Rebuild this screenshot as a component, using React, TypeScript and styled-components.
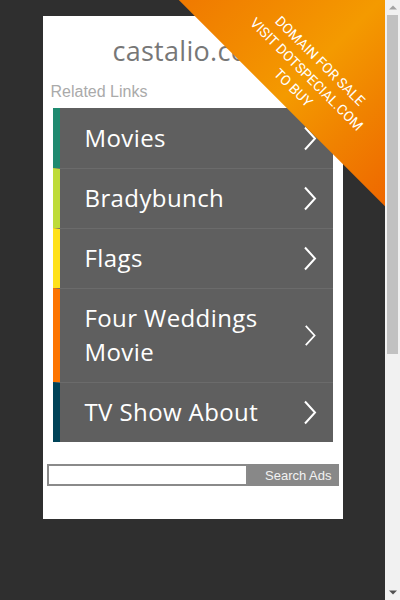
import styled, { createGlobalStyle } from "styled-components";

const GlobalStyle = createGlobalStyle`
  html, body {
    margin: 0;
    padding: 0;
    background-color: #2f2f2f;
    overflow: hidden;
  }
`;

const Page = styled.div`
  height: 100vh;
  display: flex;
`;

const Viewport = styled.div`
  position: relative;
  flex: 1;
  padding-top: 16px;
  overflow: hidden;
`;

const Card = styled.div`
  width: 300px;
  margin: 0 auto;
  padding-bottom: 33px;

  background-color: #ffffff;

  display: flex;
  flex-direction: column;
`;

const Title = styled.h1`
  margin: 0;
  height: 66px;

  color: #777777;
  font-family: "Open Sans", sans-serif;
  font-size: 27px;
  font-weight: 400;
  letter-spacing: 0.3px;

  display: flex;
  align-items: center;
  justify-content: center;
  padding-top: 3px;
  box-sizing: border-box;
`;

const SectionLabel = styled.p`
  margin: 0 0 0 8px;
  height: 26px;

  color: #aaaaaa;
  font-family: "Liberation Sans", Arial, sans-serif;
  font-size: 16px;
  line-height: 20px;
`;

const LinkList = styled.ul`
  list-style: none;
  margin: 0 0 0 10px;
  padding: 0;
  width: 280px;
`;

const LinkRow = styled.li<{ accent: string }>`
  background-color: #5f5f5f;
  border-left: 7px solid ${({ accent }) => accent};
  border-top: 1px solid #6b6b6b;

  padding: 12px 16px 13px 25px;

  display: flex;
  align-items: center;
  justify-content: space-between;

  &:first-child {
    border-top: none;
    padding-top: 13px;
  }
`;

const LinkText = styled.span`
  color: #ffffff;
  font-family: "Open Sans", sans-serif;
  font-size: 24px;
  line-height: 34px;
  letter-spacing: 0.4px;
`;

const Chevron = () => (
  <svg width="14" height="25" viewBox="0 0 14 25">
    <polyline
      points="2,1.5 12,12.5 2,23.5"
      fill="none"
      stroke="#ffffff"
      strokeWidth="2"
    />
  </svg>
);

const SearchForm = styled.form`
  margin: 22px 0 0 4px;
  width: 292px;
  height: 22px;

  display: flex;
`;

const SearchInput = styled.input`
  flex: 1;
  margin: 0;
  padding: 0 4px;
  height: 22px;
  box-sizing: border-box;

  border: 2px solid #8a8a8a;
  background-color: #ffffff;
  outline: none;
`;

const SearchButton = styled.button`
  width: 91px;
  height: 22px;
  margin: 0;
  padding: 0 7px 0 0;

  border: none;
  background-color: #888888;

  color: #f2f2f2;
  font-family: "Liberation Sans", Arial, sans-serif;
  font-size: 13px;
  text-align: right;
`;

const RibbonCorner = styled.div`
  position: absolute;
  top: 0;
  right: 0;
  width: 210px;
  height: 210px;
  overflow: hidden;
  pointer-events: none;
`;

const RibbonBand = styled.div`
  position: absolute;
  left: -5px;
  top: -44px;
  width: 340px;
  height: 170px;
  transform: rotate(45deg);

  background: linear-gradient(
    to right,
    #ef7300 0%,
    #f28a00 30%,
    #f49a00 50%,
    #f08200 70%,
    #ee6000 100%
  );

  padding-bottom: 9px;
  box-sizing: border-box;

  display: flex;
  flex-direction: column;
  justify-content: flex-end;
  align-items: center;
`;

const RibbonLine = styled.span`
  color: #ffffff;
  font-family: Roboto, sans-serif;
  font-size: 14px;
  line-height: 19px;
  text-transform: uppercase;
`;

const ScrollTrack = styled.div`
  width: 15px;
  background-color: #f1f1f1;

  display: flex;
  flex-direction: column;
`;

const ScrollArrow = styled.div<{ color: string }>`
  height: 15px;
  display: flex;
  align-items: center;
  justify-content: center;
  color: ${({ color }) => color};
`;

const ScrollThumb = styled.div`
  height: 339px;
  margin: 0 2px;
  background-color: #c1c1c1;
`;

const ScrollGap = styled.div`
  flex: 1;
`;

const ArrowIcon = ({ up }: { up: boolean }) => (
  <svg width="8" height="5" viewBox="0 0 8 5">
    <polygon
      points={up ? "0,4.5 4,0.5 8,4.5" : "0,0.5 4,4.5 8,0.5"}
      fill="currentColor"
    />
  </svg>
);

const links = [
  { label: "Movies", color: "#1f8a70" },
  { label: "Bradybunch", color: "#bedb39" },
  { label: "Flags", color: "#ffe11a" },
  { label: "Four Weddings Movie", color: "#fd7400" },
  { label: "TV Show About", color: "#004358" },
];

const App = () => {
  return (
    <Page>
      <GlobalStyle />
      <Viewport>
        <Card>
          <Title>castalio.com</Title>
          <SectionLabel>Related Links</SectionLabel>
          <LinkList>
            {links.map((link) => (
              <LinkRow key={link.label} accent={link.color}>
                <LinkText>{link.label}</LinkText>
                <Chevron />
              </LinkRow>
            ))}
          </LinkList>
          <SearchForm onSubmit={(e) => e.preventDefault()}>
            <SearchInput type="text" />
            <SearchButton type="submit">Search Ads</SearchButton>
          </SearchForm>
        </Card>
        <RibbonCorner>
          <RibbonBand>
            <RibbonLine>Domain for sale</RibbonLine>
            <RibbonLine>Visit dotspecial.com</RibbonLine>
            <RibbonLine>to buy</RibbonLine>
          </RibbonBand>
        </RibbonCorner>
      </Viewport>
      <ScrollTrack>
        <ScrollArrow color="#a3a3a3">
          <ArrowIcon up />
        </ScrollArrow>
        <ScrollThumb />
        <ScrollGap />
        <ScrollArrow color="#505050">
          <ArrowIcon up={false} />
        </ScrollArrow>
      </ScrollTrack>
    </Page>
  );
};

export default App;
